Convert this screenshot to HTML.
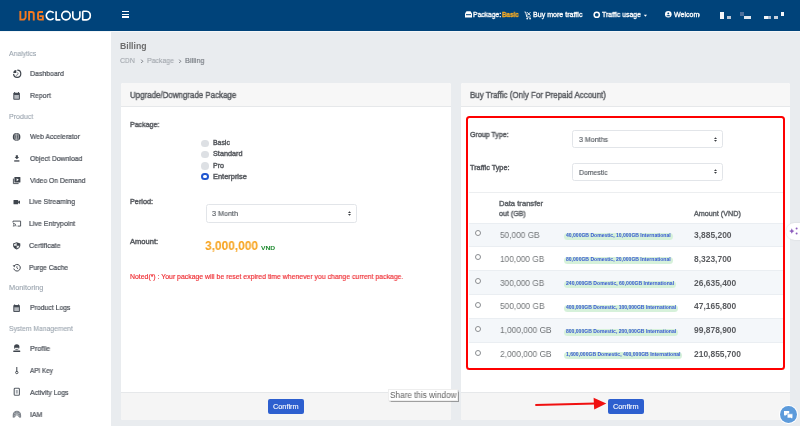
<!DOCTYPE html>
<html><head><meta charset="utf-8">
<style>
*{box-sizing:border-box;margin:0;padding:0}
html,body{width:800px;height:426px;overflow:hidden}
body{background:#e9ecef;font-family:"Liberation Sans",sans-serif;position:relative}
.t{position:absolute;white-space:nowrap;line-height:1;transform-origin:0 0;will-change:transform;font-family:"Liberation Sans",sans-serif}
.a{position:absolute}
#hdr{left:0;top:0;width:800px;height:30.6px;background:#00437a}
#side{left:0;top:30.6px;width:111px;height:396px;background:#fff}
.card{position:absolute;background:#fff;border-radius:2px;overflow:hidden}
.chd{position:absolute;left:0;top:0;right:0;height:23.5px;background:#f7f7f7;border-bottom:1px solid #e6e8ea}
.cft{position:absolute;left:0;bottom:0;right:0;height:27.3px;background:#f5f5f5;border-top:1px solid #e6e8ea}
.btn{position:absolute;background:#2d5fcf;border-radius:2px}
.sel{position:absolute;background:#fff;border:1px solid #e2e5e9;border-radius:2.5px}
.caret{position:absolute;width:0;height:0;border-left:1.6px solid transparent;border-right:1.6px solid transparent}
.radio{position:absolute;width:7.7px;height:7.7px;border-radius:50%;background:#dde0e4}
.trad{position:absolute;width:6px;height:6px;border-radius:50%;border:0.8px solid #8a8d91;background:#fff}
.badge{position:absolute;height:7px;border-radius:3.5px;background:#d6f1da}
.ico{position:absolute}
</style></head><body>
<div id="hdr" class="a"></div>
<div id="side" class="a"></div>
<div class="a" style="left:0;top:30.6px;width:800px;height:1.4px;background:#f4f6f8"></div>
<!-- logo -->
<svg class="a" style="left:0;top:0" width="110" height="30" viewBox="0 0 110 30">
  <g fill="none" stroke="#f47920" stroke-width="1.9" stroke-linecap="butt" stroke-linejoin="miter">
    <path d="M20.35 11.1 V19.6 H23.2 Q24 19.6 24.6 19 L25.2 18.2 Q25.6 17.6 25.6 16.8 V11.1"/>
    <path d="M29.1 20.55 V12.05 H31.9 Q33.75 12.05 33.75 13.9 V20.55"/>
    <path d="M43 12.05 H39.5 Q38.05 12.05 38.05 13.5 V18.15 Q38.05 19.6 39.5 19.6 H42.85 V16.15 H39.5"/>
  </g>
  <g fill="none" stroke="#ffffff" stroke-width="1.65" stroke-linecap="butt" stroke-linejoin="round">
    <path d="M53.6 12.9 A4.15 4.15 0 1 0 53.6 18.3"/>
    <path d="M56.1 11.2 V19.85 H60.4"/>
    <circle cx="66" cy="15.55" r="4.25"/>
    <path d="M72.8 11.2 V16.1 A3.55 3.55 0 0 0 79.9 16.1 V11.2"/>
    <path d="M82.7 11.2 V19.85 H86.4 A4.35 4.35 0 0 0 86.4 11.2 H82.7"/>
  </g>
</svg>
<!-- hamburger -->
<div class="a" style="left:122px;top:11px;width:7px;height:1.3px;background:#fff"></div>
<div class="a" style="left:122px;top:13.8px;width:7px;height:1.3px;background:#fff"></div>
<div class="a" style="left:122px;top:16.4px;width:7px;height:1.3px;background:#fff"></div>
<!-- header icons -->
<svg class="a" style="left:464px;top:10px" width="9" height="9" viewBox="0 0 9 9"><path d="M1 3.5 L2.5 1.2 H6.5 L8 3.5 V7.6 H1 Z" fill="#fff"/><rect x="2" y="4.2" width="5" height="1" fill="#00437a"/></svg>
<svg class="a" style="left:523.8px;top:10.5px" width="8" height="9" viewBox="0 0 8 9"><path d="M0.5 1 H1.6 L2.8 6 H6.6" stroke="#fff" stroke-width="0.9" fill="none"/><path d="M3 1.2 L6.4 4.6 M6.4 1.2 L3 4.6" stroke="#fff" stroke-width="1"/><circle cx="3.2" cy="7.6" r="0.85" fill="#fff"/><circle cx="6.1" cy="7.6" r="0.85" fill="#fff"/></svg>
<svg class="a" style="left:593px;top:11px" width="8" height="8" viewBox="0 0 8 8"><circle cx="3.75" cy="3.75" r="2.6" stroke="#fff" stroke-width="1.5" fill="none"/></svg>
<svg class="a" style="left:643px;top:13.5px" width="5" height="4" viewBox="0 0 5 4"><path d="M0.8 0.8 H4 L2.4 2.8 Z" fill="#fff"/></svg>
<svg class="a" style="left:665.2px;top:11.2px" width="7" height="7" viewBox="0 0 7 7"><circle cx="3.3" cy="3.3" r="3.3" fill="#fff"/><path d="M1.5 4.6 Q3.3 3.2 5.1 4.6 V5.2 H1.5 Z" fill="#00437a"/><circle cx="3.3" cy="2.4" r="0.95" fill="#00437a"/></svg>
<!-- redacted blocks -->
<div class="a" style="left:720px;top:12px;width:4px;height:7.4px;background:#f4f6f9"></div>
<div class="a" style="left:727px;top:16px;width:3.5px;height:3.2px;background:#b9c6d6"></div>
<div class="a" style="left:740.3px;top:12.2px;width:3.3px;height:3.8px;background:#4d6f9b"></div>
<div class="a" style="left:743.6px;top:16px;width:7px;height:3.2px;background:#dfe6ee"></div>
<div class="a" style="left:763.7px;top:16px;width:4px;height:3.2px;background:#f2f5f8"></div>
<div class="a" style="left:767.7px;top:16px;width:3.3px;height:3.2px;background:#aebdd0"></div>
<div class="a" style="left:774px;top:16px;width:3.8px;height:3.2px;background:#c6d1de"></div>
<div class="a" style="left:780.6px;top:12.2px;width:3.9px;height:4px;background:#f4f6f9"></div>

<!-- cards -->
<div class="card" style="left:120.6px;top:83px;width:330.4px;height:336.7px">
  <div class="chd"></div>
  <div class="cft"></div>
</div>
<div class="card" style="left:460.9px;top:83px;width:329.6px;height:336.7px">
  <div class="chd"></div>
  <div class="cft"></div>
</div>

<!-- left card controls -->
<div class="radio" style="left:201.1px;top:139.6px"></div>
<div class="radio" style="left:201.1px;top:150.5px"></div>
<div class="radio" style="left:201.1px;top:161.9px"></div>
<div class="radio" style="left:201.1px;top:172.8px;background:#fff;border:2.6px solid #2157d0"></div>
<div class="sel" style="left:205.6px;top:204.4px;width:151px;height:18.4px"></div>
<svg class="a" style="left:346.6px;top:210.3px" width="5" height="7" viewBox="0 0 5 7"><path d="M1 3.1 L2.5 1.3 L4 3.1 Z M1 3.9 L2.5 5.7 L4 3.9 Z" fill="#3a3d42"/></svg>
<div class="btn" style="left:267.9px;top:398.5px;width:36.1px;height:15.9px"></div>

<!-- right card -->
<div class="a" style="left:465.6px;top:116.2px;width:319.4px;height:254.1px;border:2px solid #fe0000;border-radius:3.5px"></div>
<div class="sel" style="left:572.4px;top:130.3px;width:151px;height:17.8px"></div>
<svg class="a" style="left:713.0px;top:136.0px" width="5" height="7" viewBox="0 0 5 7"><path d="M1 3.1 L2.5 1.3 L4 3.1 Z M1 3.9 L2.5 5.7 L4 3.9 Z" fill="#3a3d42"/></svg>
<div class="sel" style="left:572.4px;top:163px;width:151px;height:17.8px"></div>
<svg class="a" style="left:713.0px;top:168.4px" width="5" height="7" viewBox="0 0 5 7"><path d="M1 3.1 L2.5 1.3 L4 3.1 Z M1 3.9 L2.5 5.7 L4 3.9 Z" fill="#3a3d42"/></svg>
<div class="a" style="left:469.2px;top:192.2px;width:313.4px;height:1px;background:#eceef0"></div>
<div class="a" style="left:469.2px;top:222.60px;width:313.4px;height:23.8px;background:#f4f7fa"></div>
<div class="a" style="left:469.2px;top:222.60px;width:313.4px;height:1px;background:#eaeef2"></div>
<div class="a" style="left:469.2px;top:246.40px;width:313.4px;height:1px;background:#eaeef2"></div>
<div class="a" style="left:469.2px;top:270.20px;width:313.4px;height:23.8px;background:#f4f7fa"></div>
<div class="a" style="left:469.2px;top:270.20px;width:313.4px;height:1px;background:#eaeef2"></div>
<div class="a" style="left:469.2px;top:294.00px;width:313.4px;height:1px;background:#eaeef2"></div>
<div class="a" style="left:469.2px;top:317.80px;width:313.4px;height:23.8px;background:#f4f7fa"></div>
<div class="a" style="left:469.2px;top:317.80px;width:313.4px;height:1px;background:#eaeef2"></div>
<div class="a" style="left:469.2px;top:341.60px;width:313.4px;height:1px;background:#eaeef2"></div>
<div class="btn" style="left:607.8px;top:398.5px;width:36.1px;height:15.9px"></div>
<!-- table radios -->
<div class="trad" style="left:474.9px;top:230.2px"></div>
<div class="trad" style="left:474.9px;top:254.1px"></div>
<div class="trad" style="left:474.9px;top:278px"></div>
<div class="trad" style="left:474.9px;top:301.9px"></div>
<div class="trad" style="left:474.9px;top:325.8px"></div>
<div class="trad" style="left:474.9px;top:349.7px"></div>
<!-- badges -->
<div class="badge" style="left:563.6px;top:232.9px;width:109px"></div>
<div class="badge" style="left:563.6px;top:256.8px;width:109px"></div>
<div class="badge" style="left:563.6px;top:280.7px;width:112.3px"></div>
<div class="badge" style="left:563.6px;top:304.6px;width:114.4px"></div>
<div class="badge" style="left:563.6px;top:328.5px;width:114.4px"></div>
<div class="badge" style="left:563.6px;top:352.4px;width:118.7px"></div>
<!-- breadcrumb chevrons -->
<svg class="a" style="left:139.8px;top:57.5px" width="4" height="7" viewBox="0 0 4 7"><path d="M1.2 1.6 L2.8 3.3 L1.2 5" stroke="#6f747a" stroke-width="0.9" fill="none"/></svg>
<svg class="a" style="left:178.3px;top:57.5px" width="4" height="7" viewBox="0 0 4 7"><path d="M1.2 1.6 L2.8 3.3 L1.2 5" stroke="#6f747a" stroke-width="0.9" fill="none"/></svg>
<!-- tooltip -->
<div class="a" style="left:388.4px;top:388.6px;width:70px;height:12.2px;background:#fff;border:1px solid #eeeeee;box-shadow:0.8px 0.8px 1px rgba(0,0,0,0.35)"></div>
<!-- arrow -->
<svg class="a" style="left:530px;top:394px" width="80" height="20" viewBox="530 394 80 20">
  <path d="M535.3 404.9 L596 403.6" stroke="#f01010" stroke-width="2" fill="none"/>
  <path d="M593.6 397.8 L606.3 403.4 L594.2 409.6 Z" fill="#f01010"/>
</svg>
<!-- sparkle pill -->
<div class="a" style="left:785.8px;top:223px;width:22px;height:17px;border-radius:8.5px;background:#fff;box-shadow:0 0 1.5px rgba(0,0,0,0.15)"></div>
<svg class="a" style="left:788px;top:226px" width="12" height="11" viewBox="0 0 12 11"><path d="M3.8 2.2 Q4.2 4.6 6.4 5 Q4.2 5.4 3.8 7.8 Q3.4 5.4 1.2 5 Q3.4 4.6 3.8 2.2Z" fill="#8c5bbd"/><circle cx="8.6" cy="2.6" r="1" fill="#8c5bbd"/><circle cx="8.6" cy="7.6" r="1" fill="#8c5bbd"/></svg>
<!-- chat button -->
<div class="a" style="left:779.2px;top:405.4px;width:18.4px;height:18.4px;border-radius:50%;background:#fff"></div>
<div class="a" style="left:780px;top:406.2px;width:16.8px;height:16.8px;border-radius:50%;background:#5d9bdb"></div>
<svg class="a" style="left:783px;top:409.5px" width="12" height="10" viewBox="0 0 12 10"><path d="M1 1 H6.2 V5 H3 L1.6 6.3 V5 H1 Z" fill="#fff"/><path d="M4.2 3.8 H9.8 V8 H9.2 V9.2 L8 8 H4.2 Z" fill="#fff" stroke="#5d9bdb" stroke-width="0.6"/></svg>
<!-- sidebar icons -->
<svg class="a" style="left:0;top:60px" width="30" height="365" viewBox="0 60 30 365">
 <g fill="#3f454d" stroke="none">
  <!-- dashboard -->
  <path d="M17.3 70.1 A3.6 3.6 0 1 1 13.6 73.9" fill="none" stroke="#3f454d" stroke-width="1.2"/>
  <path d="M16.3 72.9 V69.9 A3 3 0 0 0 13.3 72.9 Z" fill="#3f454d"/>
  <path d="M17.6 72.4 A1.8 1.8 0 0 1 15.8 75.3" fill="none" stroke="#3f454d" stroke-width="0.7"/>
  <!-- report calendar -->
  <rect x="13.3" y="92.7" width="6.6" height="7" rx="0.8" fill="#454b54"/>
  <rect x="14.3" y="95.0" width="4.6" height="3.8" fill="#b5b9be"/>
  <rect x="14.2" y="92" width="0.9" height="1.2"/><rect x="18.1" y="92" width="0.9" height="1.2"/>
  <!-- globe -->
  <circle cx="16.6" cy="136.9" r="3.8"/>
  <path d="M15.3 133.8 Q14.4 136.9 15.3 140 M17.9 133.8 Q18.8 136.9 17.9 140 M16.6 133.4 V140.4" stroke="#fff" stroke-width="0.6" fill="none"/>
  <!-- download -->
  <path d="M15.8 155.2 H17.9 V157 H19.1 L16.85 159.2 L14.6 157 H15.8 Z"/>
  <rect x="14.2" y="160.3" width="5.2" height="1.3"/>
  <!-- video -->
  <rect x="14.4" y="177" width="6" height="5.6" rx="0.5"/>
  <path d="M16.6 178.3 L18.8 179.8 L16.6 181.3 Z" fill="#fff"/>
  <path d="M13.4 178.6 V183.6 H18.6" stroke="#3f454d" stroke-width="0.9" fill="none"/>
  <!-- videocam -->
  <rect x="13.5" y="200.1" width="4.7" height="4.2" rx="0.5"/>
  <path d="M18.1 201.6 L20 200.4 V204 L18.1 202.8 Z"/>
  <!-- cast -->
  <path d="M13 222.5 V221.1 H20.6 V226.1 H17.6" stroke="#3f454d" stroke-width="0.9" fill="none"/>
  <path d="M13 223.3 A3 3 0 0 1 16 226.3 M13 224.8 A1.5 1.5 0 0 1 14.5 226.3" stroke="#3f454d" stroke-width="0.8" fill="none"/>
  <circle cx="13.3" cy="226" r="0.5"/>
  <!-- shield -->
  <path d="M16.7 242.2 L20.3 243.6 V245.6 Q20.3 248.3 16.7 249.4 Q13.1 248.3 13.1 245.6 V243.6 Z"/>
  <path d="M16.7 243.1 V245.8 H13.9 V244.2 Z M16.7 245.8 H19.5 Q19.3 247.8 16.7 248.6 Z" fill="#fff" opacity="0.85"/>
  <!-- history -->
  <path d="M14.2 266 A3.3 3.3 0 1 1 13.8 268.6" stroke="#3f454d" stroke-width="1" fill="none"/>
  <path d="M12.6 265.2 L15.1 265.4 L14.4 267.6 Z"/>
  <path d="M16.9 266.2 V268 L18.2 269" stroke="#3f454d" stroke-width="0.8" fill="none"/>
  <!-- product logs calendar -->
  <rect x="13.3" y="305.1" width="6.6" height="6.9" rx="0.8" fill="#454b54"/>
  <rect x="14.3" y="307.3" width="4.6" height="3.8" fill="#b5b9be"/>
  <rect x="14.2" y="304.4" width="0.9" height="1.2"/><rect x="18.1" y="304.4" width="0.9" height="1.2"/>
  <!-- profile -->
  <circle cx="16.75" cy="347" r="2.7"/>
  <rect x="14.8" y="347.8" width="3.9" height="1.1" fill="#fff"/>
  <rect x="13.2" y="350.6" width="7.1" height="1.4" rx="0.4"/>
  <!-- key -->
  <rect x="16.3" y="367" width="1" height="5"/>
  <circle cx="16.8" cy="372.5" r="1.2" fill="none" stroke="#3f454d" stroke-width="0.9"/>
  <!-- activity logs -->
  <rect x="14.2" y="388.3" width="5.2" height="7" rx="0.9" fill="none" stroke="#5a6068" stroke-width="1.1"/>
  <rect x="15.8" y="390" width="2" height="3.6" fill="#a8adb3"/>
  <!-- IAM -->
  <path d="M12.7 417.5 V415 A4.2 4.2 0 0 1 21.1 415 V417.5 L19.6 417.8 L16.9 415 L14.2 417.8 Z" fill="#80858c"/>
  <path d="M14 413 L19.8 416 M19.8 413 L14 416 M16.9 411.5 V414" stroke="#c8ccd0" stroke-width="0.6" fill="none"/>
 </g>
</svg>
<div class="t" style="left:473.49px;top:11px;font-size:7.0px;font-weight:400;color:#ffffff;transform:scaleX(0.9630);-webkit-text-stroke:0.3px #ffffff;">Package:</div>
<div class="t" style="left:502.49px;top:11px;font-size:7.0px;font-weight:700;color:#fbad22;transform:scaleX(0.8971);-webkit-text-stroke:0.3px #fbad22;">Basic</div>
<div class="t" style="left:532.68px;top:11px;font-size:7.0px;font-weight:400;color:#ffffff;transform:scaleX(1.0112);-webkit-text-stroke:0.3px #ffffff;">Buy more traffic</div>
<div class="t" style="left:601.88px;top:11px;font-size:7.0px;font-weight:400;color:#ffffff;transform:scaleX(0.9658);-webkit-text-stroke:0.3px #ffffff;">Traffic usage</div>
<div class="t" style="left:673.98px;top:11px;font-size:7.0px;font-weight:400;color:#ffffff;transform:scaleX(1.0029);-webkit-text-stroke:0.3px #ffffff;">Welcome</div>
<div class="t" style="left:8.83px;top:51px;font-size:7.1px;font-weight:400;color:#9aa4ae;transform:scaleX(0.9621);-webkit-text-stroke:0.1px #9aa4ae;">Analytics</div>
<div class="t" style="left:29.57px;top:70px;font-size:7.4px;font-weight:400;color:#4b5058;transform:scaleX(0.9383);-webkit-text-stroke:0.22px #4b5058;">Dashboard</div>
<div class="t" style="left:29.57px;top:92px;font-size:7.4px;font-weight:400;color:#4b5058;transform:scaleX(0.9339);-webkit-text-stroke:0.22px #4b5058;">Report</div>
<div class="t" style="left:8.83px;top:114px;font-size:7.1px;font-weight:400;color:#9aa4ae;transform:scaleX(0.9868);-webkit-text-stroke:0.1px #9aa4ae;">Product</div>
<div class="t" style="left:29.67px;top:133px;font-size:7.4px;font-weight:400;color:#4b5058;transform:scaleX(0.9209);-webkit-text-stroke:0.22px #4b5058;">Web Accelerator</div>
<div class="t" style="left:29.67px;top:155px;font-size:7.4px;font-weight:400;color:#4b5058;transform:scaleX(0.9311);-webkit-text-stroke:0.22px #4b5058;">Object Download</div>
<div class="t" style="left:29.67px;top:177px;font-size:7.4px;font-weight:400;color:#4b5058;transform:scaleX(0.9132);-webkit-text-stroke:0.22px #4b5058;">Video On Demand</div>
<div class="t" style="left:29.47px;top:198px;font-size:7.4px;font-weight:400;color:#4b5058;transform:scaleX(0.9336);-webkit-text-stroke:0.22px #4b5058;">Live Streaming</div>
<div class="t" style="left:29.47px;top:220px;font-size:7.4px;font-weight:400;color:#4b5058;transform:scaleX(0.9456);-webkit-text-stroke:0.22px #4b5058;">Live Entrypoint</div>
<div class="t" style="left:29.47px;top:242px;font-size:7.4px;font-weight:400;color:#4b5058;transform:scaleX(0.9474);-webkit-text-stroke:0.22px #4b5058;">Certificate</div>
<div class="t" style="left:29.47px;top:264px;font-size:7.4px;font-weight:400;color:#4b5058;transform:scaleX(0.9064);-webkit-text-stroke:0.22px #4b5058;">Purge Cache</div>
<div class="t" style="left:8.83px;top:285px;font-size:7.1px;font-weight:400;color:#9aa4ae;transform:scaleX(1.0404);-webkit-text-stroke:0.1px #9aa4ae;">Monitoring</div>
<div class="t" style="left:29.57px;top:304px;font-size:7.4px;font-weight:400;color:#4b5058;transform:scaleX(0.9278);-webkit-text-stroke:0.22px #4b5058;">Product Logs</div>
<div class="t" style="left:8.83px;top:326px;font-size:7.1px;font-weight:400;color:#9aa4ae;transform:scaleX(0.9534);-webkit-text-stroke:0.1px #9aa4ae;">System Management</div>
<div class="t" style="left:29.57px;top:345px;font-size:7.4px;font-weight:400;color:#4b5058;transform:scaleX(0.9661);-webkit-text-stroke:0.22px #4b5058;">Profile</div>
<div class="t" style="left:29.57px;top:367px;font-size:7.4px;font-weight:400;color:#4b5058;transform:scaleX(0.8565);-webkit-text-stroke:0.22px #4b5058;">API Key</div>
<div class="t" style="left:29.57px;top:389px;font-size:7.4px;font-weight:400;color:#4b5058;transform:scaleX(0.9281);-webkit-text-stroke:0.22px #4b5058;">Activity Logs</div>
<div class="t" style="left:29.57px;top:411px;font-size:7.4px;font-weight:400;color:#4b5058;transform:scaleX(0.9379);-webkit-text-stroke:0.22px #4b5058;">IAM</div>
<div class="t" style="left:120.31px;top:42px;font-size:8.7px;font-weight:700;color:#6c6c6c;transform:scaleX(0.9859);">Billing</div>
<div class="t" style="left:120.37px;top:57px;font-size:7.4px;font-weight:400;color:#a0a5ab;transform:scaleX(0.9186);-webkit-text-stroke:0.1px #a0a5ab;">CDN</div>
<div class="t" style="left:146.57px;top:57px;font-size:7.4px;font-weight:400;color:#a0a5ab;transform:scaleX(0.9360);-webkit-text-stroke:0.1px #a0a5ab;">Package</div>
<div class="t" style="left:185.37px;top:57px;font-size:7.4px;font-weight:400;color:#6c7178;transform:scaleX(0.9867);-webkit-text-stroke:0.1px #6c7178;">Billing</div>
<div class="t" style="left:130.20px;top:91px;font-size:8.8px;font-weight:400;color:#5a5d62;transform:scaleX(0.9012);-webkit-text-stroke:0.45px #5a5d62;">Upgrade/Downgrade Package</div>
<div class="t" style="left:130.27px;top:121px;font-size:7.4px;font-weight:400;color:#5a5d62;transform:scaleX(0.9515);-webkit-text-stroke:0.45px #5a5d62;">Package:</div>
<div class="t" style="left:212.50px;top:140px;font-size:6.6px;font-weight:400;color:#5a5d62;transform:scaleX(1.0431);-webkit-text-stroke:0.42px #5a5d62;">Basic</div>
<div class="t" style="left:212.50px;top:151px;font-size:6.6px;font-weight:400;color:#5a5d62;transform:scaleX(1.1042);-webkit-text-stroke:0.42px #5a5d62;">Standard</div>
<div class="t" style="left:212.50px;top:163px;font-size:6.6px;font-weight:400;color:#5a5d62;transform:scaleX(1.0753);-webkit-text-stroke:0.42px #5a5d62;">Pro</div>
<div class="t" style="left:212.50px;top:174px;font-size:6.6px;font-weight:400;color:#5a5d62;transform:scaleX(1.1266);-webkit-text-stroke:0.42px #5a5d62;">Enterprise</div>
<div class="t" style="left:130.28px;top:198px;font-size:7.2px;font-weight:400;color:#5a5d62;transform:scaleX(1.0121);-webkit-text-stroke:0.45px #5a5d62;">Period:</div>
<div class="t" style="left:211.66px;top:210px;font-size:7.5px;font-weight:400;color:#555a60;transform:scaleX(0.9609);-webkit-text-stroke:0.15px #555a60;">3 Month</div>
<div class="t" style="left:130.28px;top:238px;font-size:7.2px;font-weight:400;color:#5a5d62;transform:scaleX(1.0485);-webkit-text-stroke:0.45px #5a5d62;">Amount:</div>
<div class="t" style="left:205.43px;top:240px;font-size:12.6px;font-weight:700;color:#f7a21b;transform:scaleX(0.9472);">3,000,000</div>
<div class="t" style="left:260.73px;top:245px;font-size:6.1px;font-weight:700;color:#1d8a2e;transform:scaleX(1.1034);">VND</div>
<div class="t" style="left:130.29px;top:274px;font-size:6.9px;font-weight:400;color:#ee2a30;transform:scaleX(0.9990);-webkit-text-stroke:0.15px #ee2a30;">Noted(*) : Your package will be reset expired time whenever you change current package.</div>
<div class="t" style="left:273.18px;top:403px;font-size:7.2px;font-weight:400;color:#ffffff;transform:scaleX(1.0194);-webkit-text-stroke:0.1px #ffffff;">Confirm</div>
<div class="t" style="left:470.20px;top:91px;font-size:8.8px;font-weight:400;color:#5a5d62;transform:scaleX(0.9065);-webkit-text-stroke:0.45px #5a5d62;">Buy Traffic (Only For Prepaid Account)</div>
<div class="t" style="left:470.28px;top:131px;font-size:7.2px;font-weight:400;color:#5a5d62;transform:scaleX(0.9800);-webkit-text-stroke:0.45px #5a5d62;">Group Type:</div>
<div class="t" style="left:578.66px;top:136px;font-size:7.5px;font-weight:400;color:#555a60;transform:scaleX(0.9409);-webkit-text-stroke:0.15px #555a60;">3 Months</div>
<div class="t" style="left:470.28px;top:164px;font-size:7.2px;font-weight:400;color:#5a5d62;transform:scaleX(1.0113);-webkit-text-stroke:0.45px #5a5d62;">Traffic Type:</div>
<div class="t" style="left:578.66px;top:169px;font-size:7.5px;font-weight:400;color:#555a60;transform:scaleX(0.9153);-webkit-text-stroke:0.15px #555a60;">Domestic</div>
<div class="t" style="left:499.48px;top:200px;font-size:7.2px;font-weight:400;color:#62666b;transform:scaleX(1.0612);-webkit-text-stroke:0.42px #62666b;">Data transfer</div>
<div class="t" style="left:499.48px;top:210px;font-size:7.2px;font-weight:400;color:#62666b;transform:scaleX(0.9802);-webkit-text-stroke:0.42px #62666b;">out (GB)</div>
<div class="t" style="left:693.88px;top:210px;font-size:7.2px;font-weight:400;color:#62666b;transform:scaleX(1.0025);-webkit-text-stroke:0.42px #62666b;">Amount (VND)</div>
<div class="t" style="left:500.09px;top:231px;font-size:9.2px;font-weight:400;color:#727578;transform:scaleX(0.9000);">50,000 GB</div>
<div class="t" style="left:566.07px;top:233px;font-size:5.0px;font-weight:700;color:#3d5fd2;transform:scaleX(1.0096);-webkit-text-stroke:0.04px #3d5fd2;">40,000GB Domestic, 10,000GB International</div>
<div class="t" style="left:693.83px;top:231px;font-size:8.3px;font-weight:700;color:#5a5c60;transform:scaleX(1.0173);">3,885,200</div>
<div class="t" style="left:500.09px;top:255px;font-size:9.2px;font-weight:400;color:#727578;transform:scaleX(0.9021);">100,000 GB</div>
<div class="t" style="left:566.07px;top:257px;font-size:5.0px;font-weight:700;color:#3d5fd2;transform:scaleX(1.0096);-webkit-text-stroke:0.04px #3d5fd2;">80,000GB Domestic, 20,000GB International</div>
<div class="t" style="left:693.83px;top:255px;font-size:8.3px;font-weight:700;color:#5a5c60;transform:scaleX(1.0173);">8,323,700</div>
<div class="t" style="left:500.09px;top:279px;font-size:9.2px;font-weight:400;color:#727578;transform:scaleX(0.9021);">300,000 GB</div>
<div class="t" style="left:566.07px;top:281px;font-size:5.0px;font-weight:700;color:#3d5fd2;transform:scaleX(1.0152);-webkit-text-stroke:0.04px #3d5fd2;">240,000GB Domestic, 60,000GB International</div>
<div class="t" style="left:693.83px;top:279px;font-size:8.3px;font-weight:700;color:#5a5c60;transform:scaleX(1.0175);">26,635,400</div>
<div class="t" style="left:500.09px;top:302px;font-size:9.2px;font-weight:400;color:#727578;transform:scaleX(0.9084);">500,000 GB</div>
<div class="t" style="left:566.07px;top:305px;font-size:5.0px;font-weight:700;color:#3d5fd2;transform:scaleX(1.0086);-webkit-text-stroke:0.04px #3d5fd2;">400,000GB Domestic, 100,000GB International</div>
<div class="t" style="left:693.83px;top:302px;font-size:8.3px;font-weight:700;color:#5a5c60;transform:scaleX(1.0175);">47,165,800</div>
<div class="t" style="left:500.09px;top:326px;font-size:9.2px;font-weight:400;color:#727578;transform:scaleX(0.9092);">1,000,000 GB</div>
<div class="t" style="left:566.07px;top:329px;font-size:5.0px;font-weight:700;color:#3d5fd2;transform:scaleX(1.0086);-webkit-text-stroke:0.04px #3d5fd2;">800,000GB Domestic, 200,000GB International</div>
<div class="t" style="left:693.83px;top:326px;font-size:8.3px;font-weight:700;color:#5a5c60;transform:scaleX(1.0175);">99,878,900</div>
<div class="t" style="left:500.09px;top:350px;font-size:9.2px;font-weight:400;color:#727578;transform:scaleX(0.9092);">2,000,000 GB</div>
<div class="t" style="left:566.07px;top:352px;font-size:5.0px;font-weight:700;color:#3d5fd2;transform:scaleX(1.0094);-webkit-text-stroke:0.04px #3d5fd2;">1,600,000GB Domestic, 400,000GB International</div>
<div class="t" style="left:693.83px;top:350px;font-size:8.3px;font-weight:700;color:#5a5c60;transform:scaleX(1.0178);">210,855,700</div>
<div class="t" style="left:613.18px;top:403px;font-size:7.2px;font-weight:400;color:#ffffff;transform:scaleX(1.0194);-webkit-text-stroke:0.1px #ffffff;">Confirm</div>
<div class="t" style="left:389.92px;top:391px;font-size:8.4px;font-weight:400;color:#5f5f5f;transform:scaleX(0.9775);">Share this window</div><div class="a" style="left:700.2px;top:9px;width:14px;height:12px;background:#00437a"></div>
</body></html>
